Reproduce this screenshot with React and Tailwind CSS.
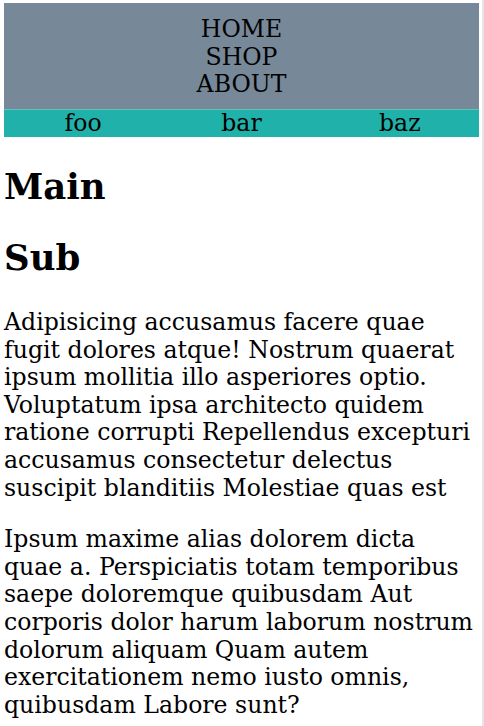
import React from 'react'

const navLinks = ['HOME', 'SHOP', 'ABOUT']
const subLinks = ['foo', 'bar', 'baz']

const App = () => {
  return (
    <div className="flex min-h-[726px] w-[484px] bg-white font-['DejaVu_Serif',serif] text-[23.6px] text-black">
      <div className="w-[479px] pl-[4px] pt-[3px]">
        <header>
          <nav className="flex flex-col items-center bg-[#778899] pt-[13px] pb-[10.5px]">
            {navLinks.map((l) => (
              <a key={l} className="leading-[27.5px]">
                {l}
              </a>
            ))}
          </nav>
          <div className="grid grid-cols-3 border-t border-[#5fc4bd] bg-[#20b2aa] text-center leading-[27px]">
            {subLinks.map((l) => (
              <span key={l}>{l}</span>
            ))}
          </div>
        </header>
        <main>
          <h1 className="mt-[29px] text-[35.5px] leading-[41px] font-bold">Main</h1>
          <h2 className="mt-[30px] text-[35.5px] leading-[41px] font-bold">Sub</h2>
          <p className="mt-[31px] leading-[27.6px]">
            Adipisicing accusamus facere quae fugit dolores atque! Nostrum
            quaerat ipsum mollitia illo asperiores optio. Voluptatum ipsa
            architecto quidem ratione corrupti Repellendus excepturi accusamus
            consectetur delectus suscipit blanditiis Molestiae quas est
          </p>
          <p className="mt-[24px] leading-[27.6px]">
            Ipsum maxime alias dolorem dicta quae a. Perspiciatis totam
            temporibus saepe doloremque quibusdam Aut corporis dolor harum
            laborum nostrum dolorum aliquam Quam autem exercitationem nemo iusto
            omnis, quibusdam Labore sunt?
          </p>
        </main>
      </div>
      <div className="ml-auto w-[2px] bg-[#e5e5e5]"></div>
    </div>
  )
}

export default App
